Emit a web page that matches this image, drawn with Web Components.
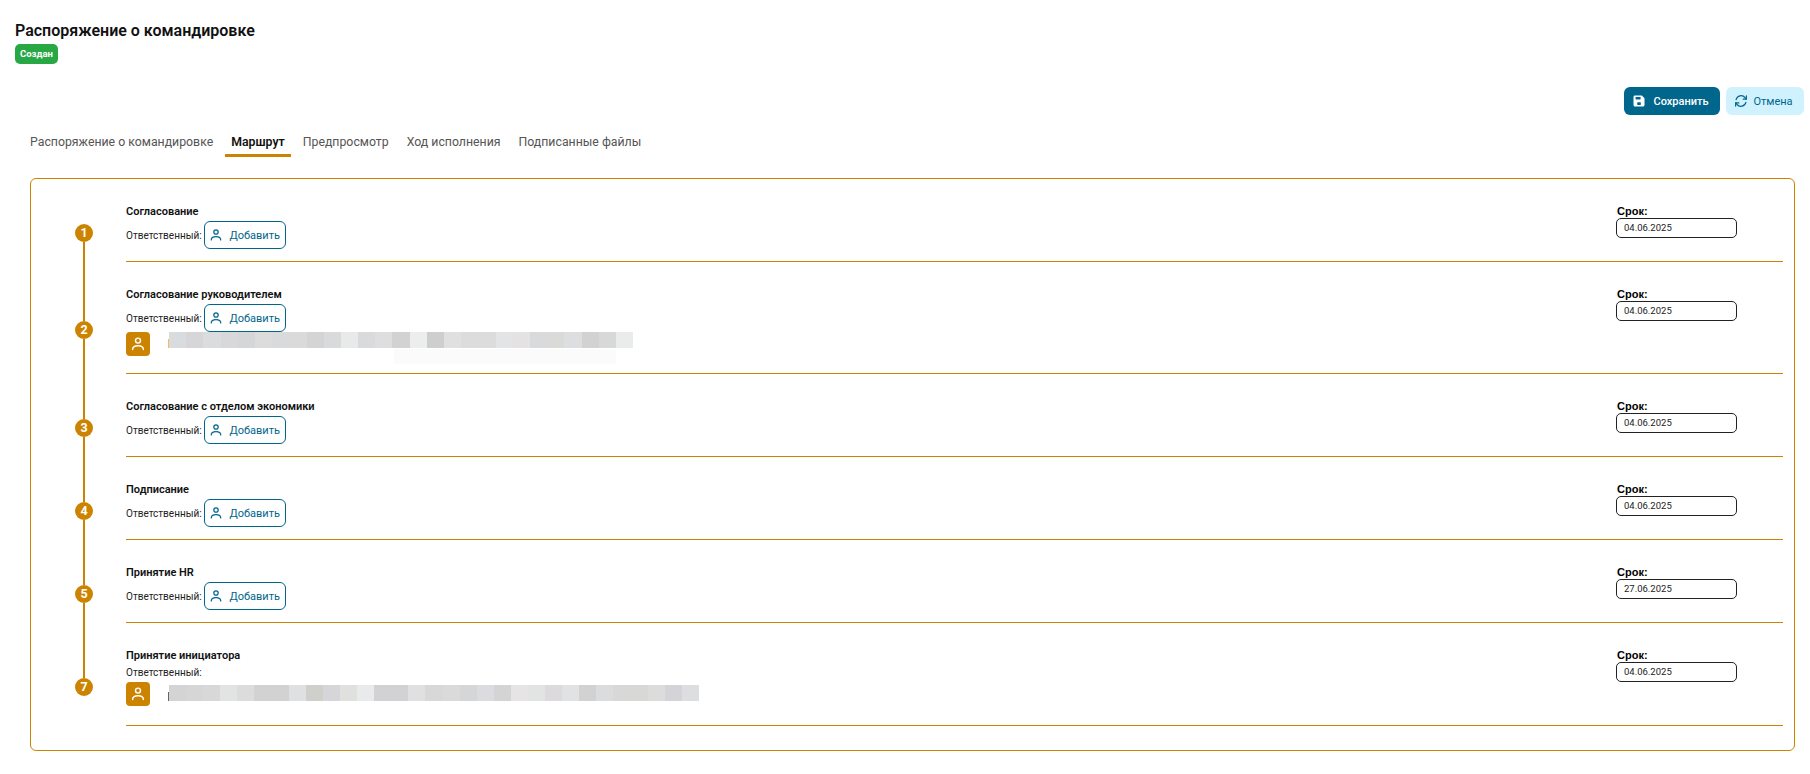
<!DOCTYPE html>
<html lang="ru">
<head>
<meta charset="utf-8">
<title>Распоряжение о командировке</title>
<style>
    html, body { margin: 0; background: #fff; }
    body { font-family: Roboto, "Liberation Sans", sans-serif; color: #111; }
</style>
</head>
<body>
<order-page>
    <route-step n="1" title="Согласование" date="04.06.2025" add></route-step>
    <route-step n="2" title="Согласование руководителем" date="04.06.2025" add>
        <person-row tick="#f2b866" shift="0" faint blocks="d8dcde d6d6d8 dadcde d8d8da d4d6d8 dcdcdc d8dadc dadada d4d4d4 d8dadc e8eaea d8dadc dedede d2d2d2 eceeee cecece e0e0e0 dcdcdc dcdcdc e2e4e6 e4e2e2 d8dadc dadad8 dcdee0 d2d2d2 d8d8d8 eaecec" width="464"></person-row>
    </route-step>
    <route-step n="3" title="Согласование с отделом экономики" date="04.06.2025" add></route-step>
    <route-step n="4" title="Подписание" date="04.06.2025" add></route-step>
    <route-step n="5" title="Принятие HR" date="27.06.2025" add></route-step>
    <route-step n="7" title="Принятие инициатора" date="04.06.2025" last>
        <person-row tick="#666" shift="3" blocks="d4d4d4 d6d6d6 d8d8d8 e2e4e4 dcdcdc d2d2d2 d2d2d2 dee0e2 cfcfcc d6d6da e0e0de e8eaec d2d2d4 d2d2d4 e0e0e0 d8d8d8 dadada d4d6d8 dcdce0 d4d4d4 e6e4e4 e2e4e4 dcdadc e0e2e4 d2d2d2 dadcde d8d8d8 d8d8d6 dcdcdc d4d4d8 dcdee0" width="530"></person-row>
    </route-step>
</order-page>

<script>
const USER_ICON = `<svg viewBox="0 0 16 16" width="14" height="14" fill="none" stroke="currentColor" stroke-width="1.4" stroke-linecap="round"><circle cx="8" cy="4.6" r="2.5"/><path d="M2.6 13.6c0-2.4 2.4-3.8 5.4-3.8s5.4 1.4 5.4 3.8"/></svg>`;

class StatusBadge extends HTMLElement {
    constructor() {
        super();
        this.attachShadow({ mode: 'open' });
        this.shadowRoot.innerHTML = `
            <style>
                :host {
                    display: inline-flex;
                    align-items: center;
                    height: 20px;
                    padding: 0 5px 2px;
                    background: #28a745;
                    color: #fff;
                    border-radius: 5px;
                    font-size: 9.5px;
                    font-weight: 700;
                    box-sizing: border-box;
                }
            </style>
            <slot></slot>
        `;
    }
}

class ActionButton extends HTMLElement {
    constructor() {
        super();
        this.attachShadow({ mode: 'open' });
        this.shadowRoot.innerHTML = `
            <style>
                :host {
                    display: inline-flex;
                    align-items: center;
                    justify-content: center;
                    gap: 6px;
                    height: 28px;
                    box-sizing: border-box;
                    border-radius: 6px;
                    font-size: 11px;
                    font-weight: 500;
                }
                :host([kind="primary"]) { background: #00668c; color: #fff; width: 96px; gap: 8px; padding-right: 2px; }
                :host([kind="soft"]) { background: #d0f2ff; color: #00668c; width: 78px; gap: 5px; padding-right: 3px; font-weight: 400; }
            </style>
            <slot name="icon"></slot>
            <slot></slot>
        `;
    }
}

class TabBar extends HTMLElement {
    constructor() {
        super();
        this.attachShadow({ mode: 'open' });
        const active = this.getAttribute('active');
        const tabs = this.getAttribute('tabs').split('|');
        this.shadowRoot.innerHTML = `
            <style>
                :host { display: flex; padding-left: 24px; gap: 6px; }
                .tab {
                    box-sizing: border-box;
                    height: 29px;
                    padding: 0 6px;
                    line-height: 28px;
                    font-size: 12.3px;
                    color: #555;
                    border-bottom: 3px solid transparent;
                    white-space: nowrap;
                }
                .tab.on { color: #111; font-weight: 600; border-bottom-color: #cc8400; }
            </style>
            ${tabs.map(t => `<div class="tab ${t === active ? 'on' : ''}">${t}</div>`).join('')}
        `;
    }
}

class PersonRow extends HTMLElement {
    constructor() {
        super();
        this.attachShadow({ mode: 'open' });
        const blocks = this.getAttribute('blocks').split(' ');
        const shift = Number(this.getAttribute('shift'));
        this.shadowRoot.innerHTML = `
            <style>
                :host { display: flex; height: 24px; margin-bottom: 5px; }
                .avatar {
                    width: 24px;
                    height: 24px;
                    border-radius: 4px;
                    background: #cc8400;
                    color: #fff;
                    display: flex;
                    align-items: center;
                    justify-content: center;
                    margin-right: 18px;
                    flex: none;
                }
                .avatar svg { width: 16px; height: 16px; }
                .tick { width: 1px; height: 9px; margin-top: ${shift + 7}px; flex: none; }
                .col { flex: none; margin-top: ${shift}px; }
                .blur { display: flex; height: 16px; }
                .blur i { flex: 1; display: block; }
                .faint { height: 15px; margin: 1px 17px 0 225px; background: #fbfbfb; }
            </style>
            <div class="avatar">${USER_ICON}</div>
            <div class="tick" style="background:${this.getAttribute('tick')}"></div>
            <div class="col" style="width:${this.getAttribute('width')}px">
                <div class="blur">${blocks.map(c => `<i style="background:#${c}"></i>`).join('')}</div>
                ${this.hasAttribute('faint') ? '<div class="faint"></div>' : ''}
            </div>
        `;
    }
}

class RouteStep extends HTMLElement {
    constructor() {
        super();
        this.attachShadow({ mode: 'open' });
        const last = this.hasAttribute('last');
        const add = this.hasAttribute('add');
        this.shadowRoot.innerHTML = `
            <style>
                :host { display: grid; grid-template-columns: 95px 1fr; }
                .rail {
                    display: grid;
                    grid-template-rows: calc(50% + 3px) 18px 1fr;
                    justify-items: center;
                    padding-left: 11px;
                }
                .seg { width: 2px; background: #cc8400; }
                .seg.off { background: transparent; }
                .num {
                    width: 18px;
                    height: 18px;
                    border-radius: 50%;
                    background: #cc8400;
                    color: #fff;
                    font-size: 12.5px;
                    font-weight: 700;
                    line-height: 18px;
                    text-align: center;
                }
                .body {
                    display: flex;
                    justify-content: space-between;
                    padding: 26px 0 12px;
                    border-bottom: 1px solid #cc8400;
                    margin-right: 11px;
                }
                .body.last { padding-bottom: 14px; }
                h4 {
                    margin: 0;
                    font-size: 11px;
                    line-height: 14px;
                    font-weight: 600;
                    color: #111;
                }
                .resp {
                    display: flex;
                    align-items: center;
                    gap: 2px;
                    font-size: 10px;
                    color: #222;
                    margin-top: 2px;
                }
                .resp.plain { margin-top: 3px; height: 16px; align-items: flex-start; line-height: 14px; }
                .add {
                    display: inline-flex;
                    align-items: center;
                    justify-content: center;
                    gap: 6px;
                    width: 82px;
                    height: 28px;
                    box-sizing: border-box;
                    border: 1px solid #00668c;
                    border-radius: 6px;
                    color: #00668c;
                    font-size: 11px;
                }
                .term { width: 167px; flex: none; margin-top: -1px; }
                .term b { display: block; font-size: 11px; line-height: 14px; padding-left: 1px; font-family: "Liberation Sans", sans-serif; color: #000; }
                .term div {
                    width: 121px;
                    height: 20px;
                    box-sizing: border-box;
                    border: 1px solid #222;
                    border-radius: 5px;
                    padding-left: 7px;
                    font-size: 9.5px;
                    line-height: 18px;
                    color: #222;
                }
            </style>
            <div class="rail">
                <div class="seg ${this.getAttribute('n') === '1' ? 'off' : ''}"></div>
                <div class="num">${this.getAttribute('n')}</div>
                <div class="seg ${last ? 'off' : ''}"></div>
            </div>
            <div class="body ${last ? 'last' : ''}">
                <div class="main">
                    <h4>${this.getAttribute('title')}</h4>
                    ${add
                        ? `<div class="resp">Ответственный: <span class="add">${USER_ICON}Добавить</span></div>`
                        : `<div class="resp plain">Ответственный:</div>`}
                    <slot></slot>
                </div>
                <div class="term">
                    <b>Срок:</b>
                    <div>${this.getAttribute('date')}</div>
                </div>
            </div>
        `;
    }
}

class OrderPage extends HTMLElement {
    constructor() {
        super();
        this.attachShadow({ mode: 'open' });
        this.shadowRoot.innerHTML = `
            <style>
                :host { display: block; padding: 21px 6px 0 0; }
                .head { padding-left: 15px; }
                h1 { margin: 0; font-size: 16px; line-height: 20px; font-weight: 600; color: #111; }
                status-badge { margin-top: 3px; }
                .actions { display: flex; justify-content: flex-end; gap: 6px; margin-top: 23px; }
                tab-bar { margin-top: 13px; margin-bottom: 21px; }
                .card {
                    margin: 0 9px 0 30px;
                    box-sizing: border-box;
                    border: 1px solid #cc8400;
                    border-radius: 6px;
                    padding: 0 0 24px;
                }
            </style>
            <div class="head">
                <h1>Распоряжение о командировке</h1>
                <status-badge>Создан</status-badge>
            </div>
            <div class="actions">
                <action-button kind="primary">
                    <svg slot="icon" viewBox="0 0 12 12" width="12" height="12"><path fill="currentColor" d="M2 .5h6.2c.4 0 .8.2 1.1.4l1.8 1.8c.3.3.4.7.4 1.100V10c0 .8-.7 1.500-1.500 1.500H2C1.200 11.500.5 10.800.5 10V2C.5 1.200 1.200.5 2 .5z"/><rect x="2.600" y="2" width="5" height="2.400" rx=".4" fill="#00668c"/><rect x="4.200" y="7.200" width="3.600" height="2.800" rx=".4" fill="#00668c"/></svg>
                    Сохранить
                </action-button>
                <action-button kind="soft">
                    <svg slot="icon" viewBox="0 0 16 16" width="14" height="14" fill="none" stroke="currentColor" stroke-width="1.4" stroke-linecap="round" stroke-linejoin="round"><path d="M2.400 6.400A5.800 5.800 0 0 1 12.600 4.200l1.500 1.600"/><path d="M14.100 2.200v3.600h-3.600"/><path d="M13.600 9.600A5.800 5.800 0 0 1 3.400 11.800L1.900 10.200"/><path d="M1.900 13.800v-3.600h3.600"/></svg>
                    Отмена
                </action-button>
            </div>
            <tab-bar active="Маршрут" tabs="Распоряжение о командировке|Маршрут|Предпросмотр|Ход исполнения|Подписанные файлы"></tab-bar>
            <div class="card"><slot></slot></div>
        `;
    }
}

customElements.define('status-badge', StatusBadge);
customElements.define('action-button', ActionButton);
customElements.define('tab-bar', TabBar);
customElements.define('person-row', PersonRow);
customElements.define('route-step', RouteStep);
customElements.define('order-page', OrderPage);
</script>
</body>
</html>
